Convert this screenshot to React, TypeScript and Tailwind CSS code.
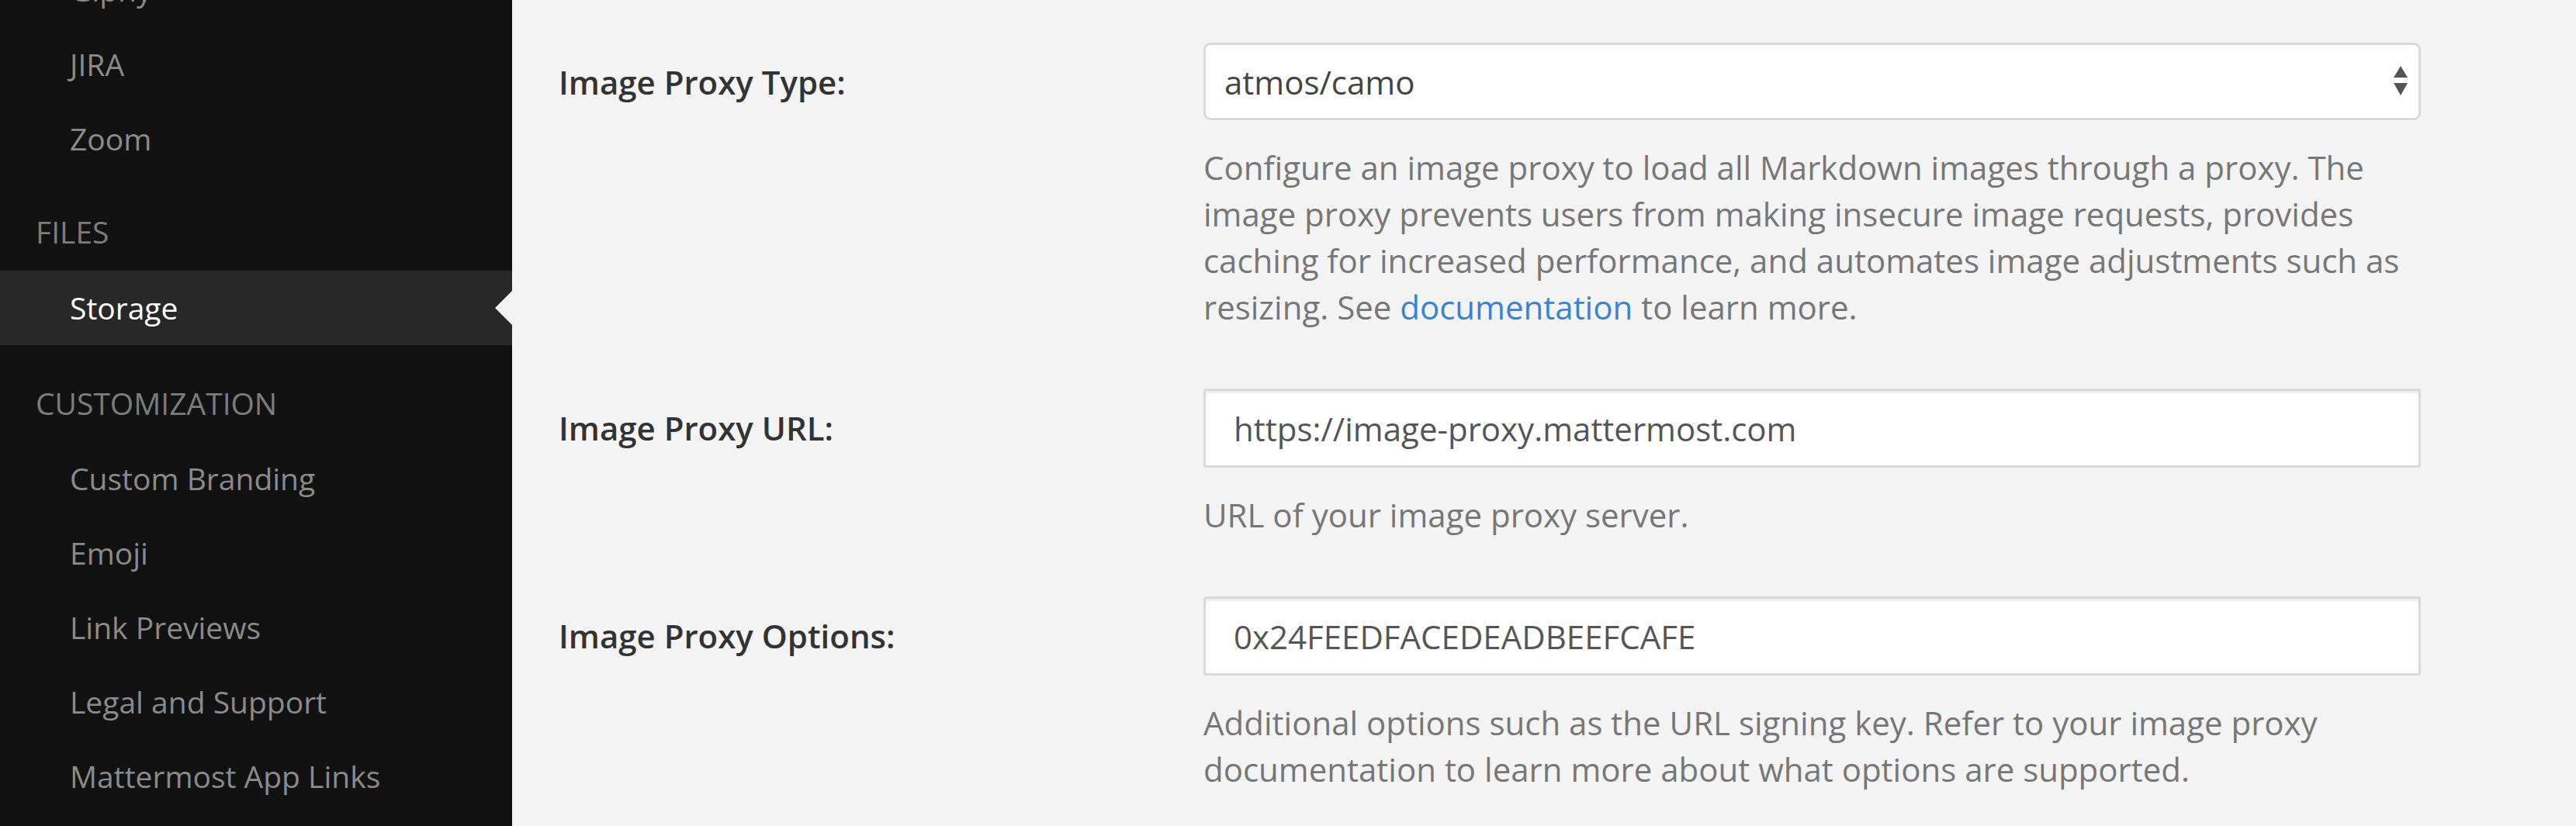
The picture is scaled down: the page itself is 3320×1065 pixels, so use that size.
import React from 'react';

type NavEntry = { kind: 'header' | 'item'; label: string; active?: boolean; pad?: string };

const nav: NavEntry[] = [
  { kind: 'item', label: 'Giphy' },
  { kind: 'item', label: 'JIRA' },
  { kind: 'item', label: 'Zoom' },
  { kind: 'header', label: 'Files', pad: 'pt-[42px] pb-[20px]' },
  { kind: 'item', label: 'Storage', active: true },
  { kind: 'header', label: 'Customization', pad: 'pt-[45px] pb-[19px]' },
  { kind: 'item', label: 'Custom Branding' },
  { kind: 'item', label: 'Emoji' },
  { kind: 'item', label: 'Link Previews' },
  { kind: 'item', label: 'Legal and Support' },
  { kind: 'item', label: 'Mattermost App Links' },
];

const Sidebar: React.FC = () => (
  <aside className="w-[660px] shrink-0 bg-[#111111] overflow-hidden">
    <div className="-mt-[61px]">
      {nav.map((n) =>
        n.kind === 'header' ? (
          <div
            key={n.label}
            className={`${n.pad} pl-[46px] text-[39px] leading-[60px] uppercase text-[#7c7c7c]`}
          >
            {n.label}
          </div>
        ) : (
          <div
            key={n.label}
            className={`relative h-[96px] flex items-center pl-[90px] text-[39px] ${
              n.active ? 'bg-[#282828] text-white' : 'text-[#8a8a8a]'
            }`}
          >
            {n.label}
            {n.active && (
              <span className="absolute right-0 top-1/2 -translate-y-1/2 w-0 h-0 border-y-[22px] border-y-transparent border-r-[22px] border-r-[#f4f4f4]" />
            )}
          </div>
        )
      )}
    </div>
  </aside>
);

const Help: React.FC<{ lines: React.ReactNode[] }> = ({ lines }) => (
  <div className="mt-[31px] text-[42px] leading-[60px] text-[#777777]">
    {lines.map((l, i) => (
      <div key={i} className="whitespace-nowrap">
        {l}
      </div>
    ))}
  </div>
);

const Row: React.FC<{ label: string; children: React.ReactNode }> = ({ label, children }) => (
  <div className="flex mb-[75px]">
    <div className="w-[831px] shrink-0 pt-[21px] text-[42px] leading-[60px] font-semibold text-[#333333]">
      {label}
    </div>
    <div className="w-[1569px] shrink-0">{children}</div>
  </div>
);

const TextInput: React.FC<{ value: string }> = ({ value }) => (
  <div className="h-[102px] border-[3px] border-[#dadada] rounded-[3px] bg-white flex items-center pl-[36px] text-[42px] text-[#555555] shadow-[inset_0_3px_3px_rgba(0,0,0,0.075)]">
    {value}
  </div>
);

const App: React.FC = () => {
  return (
    <div className="flex w-[3320px] h-[1065px] overflow-hidden bg-[#f4f4f4] font-['Open_Sans','Liberation_Sans',sans-serif]">
      <Sidebar />

      <main className="flex-1 pl-[60px] pt-[55px]">
        <Row label="Image Proxy Type:">
          <div className="relative h-[100px] border-[3px] border-[#d9d9d9] rounded-[9px] bg-white flex items-center pl-[24px] text-[42px] text-[#444444]">
            atmos/camo
            <svg
              className="absolute right-[13px] top-1/2 -translate-y-1/2"
              width="20"
              height="40"
              viewBox="0 0 20 40"
            >
              <path d="M1 15 L10 0 L19 15 Z" fill="#555555" />
              <path d="M1 22 L10 38 L19 22 Z" fill="#555555" />
            </svg>
          </div>
          <Help
            lines={[
              'Configure an image proxy to load all Markdown images through a proxy. The',
              'image proxy prevents users from making insecure image requests, provides',
              'caching for increased performance, and automates image adjustments such as',
              <>
                resizing. See <span className="text-[#3883d5]">documentation</span> to learn more.
              </>,
            ]}
          />
        </Row>

        <Row label="Image Proxy URL:">
          <TextInput value="https://image-proxy.mattermost.com" />
          <Help lines={['URL of your image proxy server.']} />
        </Row>

        <Row label="Image Proxy Options:">
          <TextInput value="0x24FEEDFACEDEADBEEFCAFE" />
          <Help
            lines={[
              'Additional options such as the URL signing key. Refer to your image proxy',
              'documentation to learn more about what options are supported.',
            ]}
          />
        </Row>
      </main>
    </div>
  );
};

export default App;
